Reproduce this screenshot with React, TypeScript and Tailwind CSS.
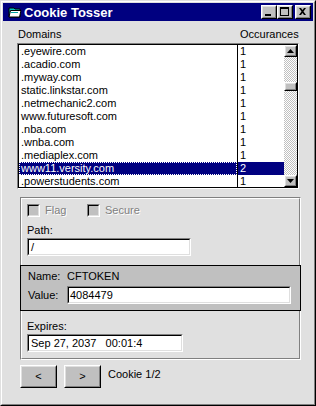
import React from "react";

const rows: [string, string][] = [
  [".eyewire.com", "1"],
  [".acadio.com", "1"],
  [".myway.com", "1"],
  ["static.linkstar.com", "1"],
  [".netmechanic2.com", "1"],
  ["www.futuresoft.com", "1"],
  [".nba.com", "1"],
  [".wnba.com", "1"],
  [".mediaplex.com", "1"],
  ["www11.versity.com", "2"],
  [".powerstudents.com", "1"],
];

function Raised({ className, children }: { className?: string; children?: React.ReactNode }) {
  return (
    <div className={"border border-t-white border-l-white border-r-black border-b-black bg-[#c0c0c0] " + (className ?? "")}>
      <div className="w-full h-full border border-t-[#dfdfdf] border-l-[#dfdfdf] border-r-[#808080] border-b-[#808080] flex items-center justify-center">
        {children}
      </div>
    </div>
  );
}

function Sunken({ className, children, inner }: { className?: string; children?: React.ReactNode; inner?: string }) {
  return (
    <div className={"border border-t-[#808080] border-l-[#808080] border-r-white border-b-white " + (className ?? "")}>
      <div className={"w-full h-full border border-t-black border-l-black border-r-[#dfdfdf] border-b-[#dfdfdf] " + (inner ?? "bg-white")}>
        {children}
      </div>
    </div>
  );
}

function AppIcon() {
  return (
    <svg width="14" height="13" viewBox="0 0 14 13" className="shrink-0">
      <path d="M1 2 L6 2 L7 3 L12 3 L12 11 L1 11 Z" fill="#00c0c0" stroke="#000" strokeWidth="1" />
      <path d="M2.5 4.5 L13 4.5 L11.5 11 L1 11 Z" fill="#ffffff" stroke="#000" strokeWidth="1" />
      <rect x="3" y="6" width="7" height="1" fill="#00a0a0" />
    </svg>
  );
}

function TitleBtn({ kind, className }: { kind: "min" | "max" | "close"; className?: string }) {
  return (
    <Raised className={"w-[16px] h-[14px] " + (className ?? "")}>
      <svg width="12" height="10" viewBox="0 0 12 10">
        {kind === "min" && <rect x="2" y="7" width="6" height="2" fill="#000" />}
        {kind === "max" && (
          <>
            <rect x="1.5" y="0.5" width="8" height="8" fill="none" stroke="#000" />
            <rect x="1" y="1" width="9" height="1" fill="#000" />
          </>
        )}
        {kind === "close" && (
          <path d="M2 1 L4 1 L5.5 3 L7 1 L9 1 L6.5 4.5 L9 8 L7 8 L5.5 6 L4 8 L2 8 L4.5 4.5 Z" fill="#000" />
        )}
      </svg>
    </Raised>
  );
}

function ArrowBtn({ dir }: { dir: "up" | "down" }) {
  return (
    <Raised className="w-[13px] h-[12px] shrink-0">
      <svg width="7" height="4" viewBox="0 0 7 4">
        {dir === "up" ? <path d="M3.5 0 L7 4 L0 4 Z" fill="#000" /> : <path d="M0 0 L7 0 L3.5 4 Z" fill="#000" />}
      </svg>
    </Raised>
  );
}

function CheckBox({ label, x }: { label: string; x: string }) {
  return (
    <div className={"flex items-center h-[13px] " + x}>
      <Sunken className="w-[13px] h-[13px]" inner="bg-[#c0c0c0]" />
      <span className="ml-[5px] text-[#808080] [text-shadow:1px_1px_0_#ffffff]">{label}</span>
    </div>
  );
}

export default function App() {
  return (
    <div className="w-[316px] h-[406px] font-['Liberation_Sans',Arial,sans-serif] text-[11px] leading-[13px] text-black bg-[#e0e0e0] border border-t-[#e0e0e0] border-l-[#e0e0e0] border-r-black border-b-black select-none">
      <div className="h-full flex flex-col border border-t-white border-l-white border-r-[#808080] border-b-[#808080] p-px">
        {/* Title bar */}
        <div className="h-[18px] shrink-0 bg-[#000080] flex items-center pl-[5px] pr-[2px]">
          <AppIcon />
          <span className="ml-[2px] text-white font-bold text-[13px] leading-[15px]">Cookie Tosser</span>
          <div className="ml-auto flex items-center">
            <TitleBtn kind="min" />
            <TitleBtn kind="max" />
            <TitleBtn kind="close" className="ml-[2px]" />
          </div>
        </div>

        {/* Column headers */}
        <div className="flex mt-[7px] h-[13px]">
          <span className="ml-[15px] w-[222px]">Domains</span>
          <span>Occurances</span>
        </div>

        {/* List */}
        <div className="mt-[2px] ml-[14px] w-[282px] h-[146px] border border-t-[#808080] border-l-[#808080] border-r-white border-b-white">
          <div className="h-full border border-black bg-white flex overflow-hidden">
            <div className="flex-1 flex flex-col">
              {rows.map(([d, n], i) => {
                const sel = i === 9;
                return (
                  <div key={i} className={"flex h-[13px] shrink-0 " + (sel ? "bg-[#000080] text-white" : "")}>
                    <div className="w-[219px] border-r border-black">
                      {sel ? (
                        <div className="h-full border border-dotted border-white pl-[1px] leading-[11px] whitespace-nowrap">{d}</div>
                      ) : (
                        <div className="pl-[2px] whitespace-nowrap">{d}</div>
                      )}
                    </div>
                    <div className="flex-1 pl-[2px]">{n}</div>
                  </div>
                );
              })}
              <div className="flex-1 flex">
                <div className="w-[219px] border-r border-black" />
              </div>
            </div>
            <div className="w-[13px] flex flex-col">
              <ArrowBtn dir="up" />
              <div className="flex-1 flex flex-col bg-[repeating-conic-gradient(#c0c0c0_0%_25%,#ffffff_0%_50%)] bg-[length:2px_2px]">
                <div className="h-[25px]" />
                <Raised className="w-[13px] h-[9px]" />
              </div>
              <ArrowBtn dir="down" />
            </div>
          </div>
        </div>

        {/* Group */}
        <div className="mt-[8px] ml-[17px] w-[281px] border border-t-[#808080] border-l-[#808080] border-r-white border-b-white">
          <div className="border border-t-white border-l-white border-r-[#808080] border-b-[#808080]">
            <div className="pl-[5px] pt-[5px]">
              <div className="flex">
                <CheckBox label="Flag" x="w-[60px]" />
                <CheckBox label="Secure" x="" />
              </div>
              <div className="mt-[7px] h-[13px]">Path:</div>
              <Sunken className="mt-px w-[164px] h-[18px]">
                <div className="pl-[2px] leading-[14px]">/</div>
              </Sunken>
            </div>

            <div className="-mx-[2px] mt-[9px] border border-black bg-[#c0c0c0] pt-[4px] pb-[6px] pl-[7px]">
              <div className="flex h-[13px]">
                <span className="w-[39px]">Name:</span>
                <span>CFTOKEN</span>
              </div>
              <div className="flex items-center mt-[3px]">
                <span className="w-[39px]">Value:</span>
                <Sunken className="w-[224px] h-[18px]">
                  <div className="pl-[1px] leading-[14px]">4084479</div>
                </Sunken>
              </div>
            </div>

            <div className="pl-[5px] pt-[9px] pb-[6px]">
              <div className="h-[13px]">Expires:</div>
              <Sunken className="mt-px w-[156px] h-[18px]">
                <div className="pl-[2px] leading-[14px] whitespace-pre">Sep 27, 2037   00:01:4</div>
              </Sunken>
            </div>
          </div>
        </div>

        {/* Buttons */}
        <div className="flex mt-[5px] ml-[17px]">
          <Raised className="w-[37px] h-[23px]">
            <span>&lt;</span>
          </Raised>
          <Raised className="w-[37px] h-[23px] ml-[7px]">
            <span>&gt;</span>
          </Raised>
          <span className="ml-[7px] mt-[3px]">Cookie 1/2</span>
        </div>
      </div>
    </div>
  );
}
